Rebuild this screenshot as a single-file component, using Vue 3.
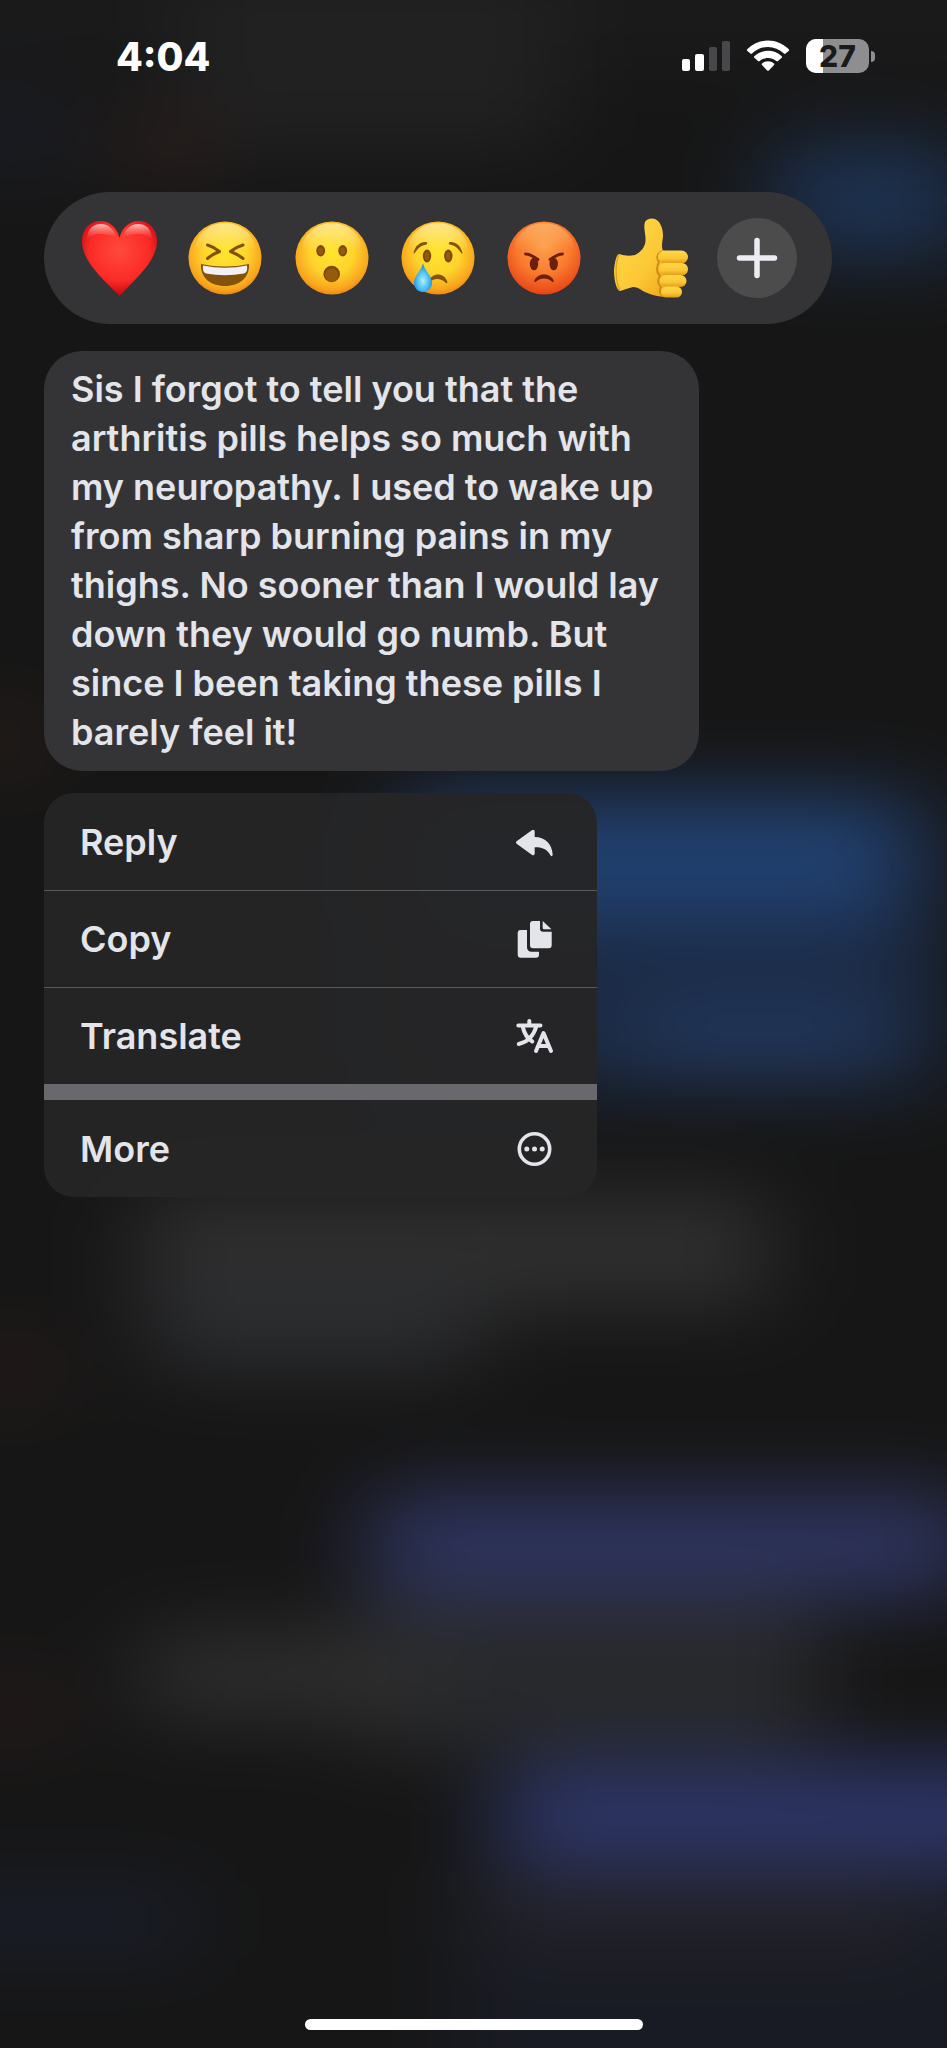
<template>
  <div class="screen">
    <svg class="backdrop" viewBox="0 0 947 2048" preserveAspectRatio="none" aria-hidden="true">
      <defs>
        <filter id="soft" x="-50%" y="-50%" width="200%" height="200%" color-interpolation-filters="sRGB">
          <feGaussianBlur stdDeviation="46 36" />
        </filter>
      </defs>
      <rect width="947" height="2048" fill="#161616" />
      <g filter="url(#soft)">
        <rect x="-200" y="-200" width="1347" height="2448" fill="#161616" />
        <rect v-for="(b, i) in blobs" :key="i" :x="b.x" :y="b.y" :width="b.w" :height="b.h" rx="30" :fill="b.color" />
      </g>
    </svg>

    <header class="status-bar">
      <time class="clock">4:04</time>
      <div class="status-icons">
        <svg class="signal" viewBox="0 0 48 30" aria-hidden="true">
          <rect x="0" y="18" width="8" height="12" rx="2" fill="#fff" />
          <rect x="13" y="13" width="9" height="17" rx="2" fill="#fff" />
          <rect x="27" y="6" width="8" height="24" rx="2" fill="#48484a" />
          <rect x="40" y="0" width="8" height="30" rx="2" fill="#48484a" />
        </svg>
        <svg class="wifi" viewBox="0 0 44 32" aria-hidden="true">
          <path d="M1.2 9.3C13 -2.4 31 -2.4 42.8 9.3Q43.5 10 42.8 10.7L39.6 13.6Q38.8 14.3 38 13.5C29 4.8 15 4.8 6 13.5Q5.2 14.3 4.4 13.6L1.2 10.7Q.5 10 1.2 9.3Z" fill="#fff" />
          <path d="M8.3 16.3C16 9 28 9 35.7 16.3Q36.4 17 35.7 17.7L32 21.1Q31.2 21.8 30.4 21.1C25.6 16.8 18.4 16.8 13.6 21.1Q12.8 21.8 12 21.1L8.3 17.7Q7.6 17 8.3 16.3Z" fill="#fff" />
          <path d="M16 23.6C19.5 20.6 24.5 20.6 28 23.6Q28.7 24.3 28 25L22.8 30.4Q22 31.2 21.2 30.4L16 25Q15.3 24.3 16 23.6Z" fill="#fff" />
        </svg>
        <div class="battery">
          <div class="battery-body">
            <div class="battery-level" :style="{ width: battery + '%' }"></div>
            <span class="battery-text">{{ battery }}</span>
          </div>
          <div class="battery-cap"></div>
        </div>
      </div>
    </header>

    <main class="content">
      <svg class="shared-defs" aria-hidden="true">
        <defs>
          <radialGradient id="face" cx=".5" cy=".42" r=".6">
            <stop offset="0" stop-color="#ffe62e" />
            <stop offset=".5" stop-color="#fed42c" />
            <stop offset=".85" stop-color="#f9a51d" />
            <stop offset="1" stop-color="#e98212" />
          </radialGradient>
          <linearGradient id="shine" x1="0" y1="0" x2="0" y2="1">
            <stop offset="0" stop-color="#fff3b0" stop-opacity=".75" />
            <stop offset=".5" stop-color="#fff3b0" stop-opacity="0" />
          </linearGradient>
          <radialGradient id="rage" cx=".5" cy=".35" r=".66">
            <stop offset="0" stop-color="#fca04a" />
            <stop offset=".55" stop-color="#fa7a2e" />
            <stop offset="1" stop-color="#e84313" />
          </radialGradient>
          <radialGradient id="heart" cx=".5" cy=".4" r=".58">
            <stop offset="0" stop-color="#ff4a3d" />
            <stop offset=".7" stop-color="#fb2a26" />
            <stop offset="1" stop-color="#c50d14" />
          </radialGradient>
          <linearGradient id="heartShine" x1="0" y1="0" x2="0" y2="1">
            <stop offset="0" stop-color="#ffd5d3" stop-opacity=".9" />
            <stop offset="1" stop-color="#ff5a4f" stop-opacity="0" />
          </linearGradient>
          <radialGradient id="tear" cx=".5" cy=".6" r=".55">
            <stop offset="0" stop-color="#b4f0ff" />
            <stop offset=".5" stop-color="#57c6f8" />
            <stop offset="1" stop-color="#1b8fd6" />
          </radialGradient>
          <linearGradient id="hand" x1="0" y1="0" x2="1" y2="1">
            <stop offset="0" stop-color="#ffda4a" />
            <stop offset=".6" stop-color="#fdc835" />
            <stop offset="1" stop-color="#eda41c" />
          </linearGradient>
          <linearGradient id="finger" x1="0" y1="0" x2="0" y2="1">
            <stop offset="0" stop-color="#ffd84a" />
            <stop offset=".6" stop-color="#fcc634" />
            <stop offset="1" stop-color="#e09a18" />
          </linearGradient>
        </defs>
      </svg>

      <div class="reactions">
        <button class="reaction" type="button" aria-label="Love">
          <svg viewBox="0 0 80 80">
            <path d="M40.5 20C43 9 51 3 60 3C70 3 78 11 78 23C78 43 58 59 41.5 77Q40.5 78.5 39.5 77C22 59 3 43 3 23C3 11 11 3 21 3C30 3 38 9 40.5 20Z" fill="url(#heart)" />
            <path d="M8 22C8 10 15 6 22 6C29 6 35 11 38 20C34 17 28 16 22 16C16 16 12 17 8 22Z" fill="url(#heartShine)" />
            <path d="M43 20C46 11 52 6 59 6C66 6 73 10 73 22C69 17 65 16 59 16C53 16 47 17 43 20Z" fill="url(#heartShine)" />
          </svg>
        </button>
        <button class="reaction" type="button" aria-label="Haha">
          <svg viewBox="0 0 80 80">
            <circle cx="40" cy="40" r="36.5" fill="url(#face)" />
            <ellipse cx="40" cy="32" rx="30" ry="27" fill="url(#shine)" />
            <g fill="none" stroke="#81510d" stroke-width="3" stroke-linecap="round" stroke-linejoin="round">
              <path d="M22.5 27Q29 29 34.5 33.5Q28 36 22.5 40.5" />
              <path d="M58 27Q51 29 45.5 33.5Q52 36 58 40.5" />
            </g>
            <path d="M16 46Q40 51 64 46C65 59 55 68 40 68C25 68 15 59 16 46Z" fill="#84520c" />
            <path d="M18 47.5Q40 52 62 47.5Q63 54 59 55.5Q40 59 21 55.5Q17 54 18 47.5Z" fill="#f3f1f5" />
          </svg>
        </button>
        <button class="reaction" type="button" aria-label="Wow">
          <svg viewBox="0 0 80 80">
            <circle cx="40" cy="40" r="36.5" fill="url(#face)" />
            <ellipse cx="40" cy="32" rx="30" ry="27" fill="url(#shine)" />
            <g fill="#7f4a08">
              <ellipse cx="28.7" cy="32.7" rx="4.4" ry="5.7" />
              <ellipse cx="50.7" cy="32.7" rx="4.4" ry="5.7" />
              <circle cx="39.7" cy="56" r="8.3" />
            </g>
            <circle cx="39.7" cy="57" r="6.5" fill="#965b0a" />
            <ellipse cx="28.7" cy="33" rx="2.5" ry="3.5" fill="#965b0a" />
            <ellipse cx="50.7" cy="33" rx="2.5" ry="3.5" fill="#965b0a" />
          </svg>
        </button>
        <button class="reaction" type="button" aria-label="Sad">
          <svg viewBox="0 0 80 80">
            <circle cx="40" cy="40" r="36.5" fill="url(#face)" />
            <ellipse cx="40" cy="32" rx="30" ry="27" fill="url(#shine)" />
            <ellipse cx="29" cy="38" rx="4.2" ry="6.4" fill="#7f4a08" />
            <ellipse cx="50.3" cy="38" rx="4.2" ry="6.4" fill="#7f4a08" />
            <ellipse cx="29" cy="38" rx="2.2" ry="4" fill="#965b0a" />
            <ellipse cx="50.3" cy="38" rx="2.2" ry="4" fill="#965b0a" />
            <g fill="#86530d">
              <path d="M15.5 35C17 28 22 23.5 28.5 24Q30 24.8 28.5 26.5C23 27.5 20 30 16.8 35Q16 36 15.5 35Z" />
              <path d="M64.5 35C63 28 58 23.5 51.5 24Q50 24.8 51.5 26.5C57 27.5 60 30 63.2 35Q64 36 64.5 35Z" />
              <path d="M31 63C34 54.5 46 54 49.5 64Q49.5 65.5 48 65C43 60 36 60 32 64Z" />
            </g>
            <path d="M25 45.5C27 53 34 58 34 65C34 70 30 74 25 74C20 74 16 70 16 65C16 58 23 53 25 45.5Z" fill="url(#tear)" />
          </svg>
        </button>
        <button class="reaction" type="button" aria-label="Angry">
          <svg viewBox="0 0 80 80">
            <circle cx="40" cy="40" r="36.5" fill="url(#rage)" />
            <ellipse cx="40" cy="32" rx="30" ry="27" fill="url(#shine)" opacity=".5" />
            <g fill="#6b200c">
              <ellipse cx="30" cy="46" rx="4.2" ry="6.3" />
              <ellipse cx="49.7" cy="46" rx="4.2" ry="6.3" />
              <path d="M30.5 62C34 54.5 46 54.5 49.5 62Q50.5 65 48 63.5C43 59.5 37 59.5 32 63.5Q29.5 65 30.5 62Z" />
            </g>
            <g fill="none" stroke="#6b200c" stroke-width="2.8" stroke-linecap="round">
              <path d="M21.5 36Q26 36 34 41.5" />
              <path d="M58.5 36Q54 36 46 41.5" />
            </g>
          </svg>
        </button>
        <button class="reaction" type="button" aria-label="Like">
          <svg viewBox="0 0 80 80">
            <path d="M8 36C14 38 19 38 24 37C30 34 34 29 34.5 23C35 16 32 10 34 4C36 0 43 -1 47 3C51 7 53 15 51.5 22C51 26 50.5 29 52 33L60 40L58 78C50 80 41 77 34 74C30 72 27 69 22 69C17 70 13 72 9 73C5 72 3 61 3 52C4 44 5 37 8 36Z" fill="url(#hand)" />
            <path d="M8 37C4 44 4 64 9 72" fill="none" stroke="#e5a31c" stroke-width="1.5" />
            <path d="M52 33C46 35 45 40 48 44C45 50 45 54 49 58C46 62 47 67 50 69C48 73 49 77 52 78" fill="none" stroke="#cf8c16" stroke-width="2" stroke-linecap="round" />
            <rect x="47" y="32.5" width="30" height="13" rx="6.5" fill="url(#finger)" />
            <rect x="48" y="45" width="29" height="12.5" rx="6.2" fill="url(#finger)" />
            <rect x="49" y="57" width="26.5" height="12" rx="6" fill="url(#finger)" />
            <rect x="50" y="68.5" width="21" height="11" rx="5.5" fill="url(#finger)" />
          </svg>
        </button>
        <button class="reaction add" type="button" aria-label="Add reaction">
          <svg viewBox="0 0 80 80">
            <path d="M40 22.5V57.5M22.5 40H57.5" stroke="#ececf2" stroke-width="5.5" stroke-linecap="round" />
          </svg>
        </button>
      </div>

      <p class="bubble">{{ message }}</p>

      <ul class="menu">
        <li v-for="item in menu" :key="item.id" class="menu-row" :class="{ detached: item.detached }">
          <button class="menu-item" type="button">
            <span>{{ item.label }}</span>
            <svg class="menu-icon" viewBox="0 0 40 40" aria-hidden="true">
              <path v-if="item.id === 'reply'" d="M2.6 19.2L17.8 8.2Q20.7 6.8 20.7 9.8V15C31 15 38 22 38.7 32.5Q38.3 35.5 36.6 33.5C33 27 28.5 25.3 20.7 25.3V31.2Q20.7 34.2 17.8 32.7L2.6 21.8Q1.2 20.5 2.6 19.2Z" fill="#e4e5ea" />
              <g v-else-if="item.id === 'copy'" fill="#e4e5ea">
                <path d="M6.7 11H13V28Q13 32.7 17.7 32.7H25V35.7Q25 38.7 22 38.7H6.7Q3.7 38.7 3.7 35.7V14Q3.7 11 6.7 11Z" />
                <path d="M19 2H26V9.5Q26 12.7 29.2 12.7H37.7V26.3Q37.7 29.3 34.7 29.3H19Q16 29.3 16 26.3V5Q16 2 19 2Z" />
                <path d="M28.7 2L37.5 10.3H30.2Q28.7 10.3 28.7 8.8Z" />
              </g>
              <g v-else-if="item.id === 'translate'" fill="none" stroke="#e4e5ea" stroke-width="4" stroke-linecap="round" stroke-linejoin="round">
                <path d="M4.3 9.5H26.5M15.3 5V9.5M8.7 10.5C10 17 13.5 22.5 18.3 25.5M22.3 10.5C19.5 20 13.5 26 4.8 28" />
                <path d="M22 35L29.5 17L37 35M24.5 30H34.5" />
              </g>
              <g v-else>
                <circle cx="20.5" cy="20" r="15.2" fill="none" stroke="#e4e5ea" stroke-width="3.6" />
                <g fill="#e4e5ea">
                  <circle cx="12.8" cy="20" r="2.5" />
                  <circle cx="20.5" cy="20" r="2.5" />
                  <circle cx="28.2" cy="20" r="2.5" />
                </g>
              </g>
            </svg>
          </button>
        </li>
      </ul>
    </main>

    <div class="home-indicator"></div>
  </div>
</template>

<script setup>
import { ref } from 'vue';

const battery = ref(27);

const message = ref(
  'Sis I forgot to tell you that the arthritis pills helps so much with my neuropathy. I used to wake up from sharp burning pains in my thighs. No sooner than I would lay down they would go numb. But since I been taking these pills I barely feel it!'
);

const menu = [
  { id: 'reply', label: 'Reply' },
  { id: 'copy', label: 'Copy' },
  { id: 'translate', label: 'Translate' },
  { id: 'more', label: 'More', detached: true },
];

// blurred conversation behind the menu
const blobs = [
  { x: -100, y: -100, w: 1150, h: 170, color: '#1a1a1b' },
  { x: 180, y: -40, w: 380, h: 190, color: '#212121' },
  { x: 110, y: 110, w: 110, h: 70, color: '#2a1e1c' },
  { x: -60, y: 90, w: 140, h: 90, color: '#1a1c23' },
  { x: 770, y: 140, w: 200, h: 120, color: '#1d3150' },
  { x: -60, y: 700, w: 110, h: 80, color: '#241b17' },
  { x: 400, y: 790, w: 540, h: 300, color: '#1b2a44' },
  { x: 400, y: 800, w: 500, h: 120, color: '#21406f' },
  { x: 630, y: 1000, w: 260, h: 70, color: '#22375c' },
  { x: 140, y: 1190, w: 630, h: 120, color: '#2e2e2e' },
  { x: 150, y: 1270, w: 330, h: 100, color: '#2c2d30' },
  { x: -60, y: 1330, w: 130, h: 80, color: '#221a18' },
  { x: 370, y: 1490, w: 600, h: 110, color: '#2d335c' },
  { x: 350, y: 1600, w: 470, h: 150, color: '#28292c' },
  { x: 140, y: 1630, w: 300, h: 90, color: '#2d2d2d' },
  { x: -60, y: 1670, w: 130, h: 80, color: '#221a18' },
  { x: 450, y: 1860, w: 700, h: 320, color: '#191b24' },
  { x: 480, y: 1860, w: 440, h: 90, color: '#222228' },
  { x: 500, y: 1760, w: 600, h: 110, color: '#2c3464' },
  { x: -100, y: 1880, w: 300, h: 80, color: '#1a1d29' },
];
</script>

<style scoped>
.screen {
  position: relative;
  display: flex;
  flex-direction: column;
  min-height: 100vh;
  overflow: hidden;
  background: #161616;
  color: #e4e5ea;
  font-family: Inter, "Liberation Sans", sans-serif;
}

.backdrop {
  position: absolute;
  inset: 0;
  width: 100%;
  height: 100%;
}

.status-bar {
  position: relative;
  display: flex;
  align-items: center;
  justify-content: space-between;
  height: 112px;
  padding: 0 72px 0 116px;
}

.clock {
  color: #fff;
  font-size: 39px;
  font-weight: 800;
}

.status-icons {
  display: flex;
  align-items: center;
  gap: 16px;
}

.signal {
  width: 48px;
  height: 30px;
}

.wifi {
  width: 44px;
  height: 32px;
}

.battery {
  display: flex;
  align-items: center;
  gap: 2px;
}

.battery-body {
  position: relative;
  display: flex;
  align-items: center;
  justify-content: center;
  width: 63px;
  height: 34px;
  border-radius: 10px;
  background: #8e8e90;
  overflow: hidden;
}

.battery-level {
  position: absolute;
  inset: 0 auto 0 0;
  background: #fff;
}

.battery-text {
  position: relative;
  color: #1a1a1c;
  font-size: 30px;
  font-weight: 800;
}

.battery-cap {
  width: 4px;
  height: 11px;
  border-radius: 0 5px 5px 0;
  background: #8e8e90;
}

.content {
  position: relative;
  padding: 80px 44px 40px;
}

.shared-defs {
  position: absolute;
  width: 0;
  height: 0;
}

.reactions {
  box-sizing: border-box;
  display: flex;
  align-items: center;
  justify-content: space-between;
  max-width: 788px;
  height: 132px;
  padding: 0 35px;
  border-radius: 66px;
  background: #343436;
}

.reaction {
  width: 80px;
  height: 80px;
  padding: 0;
  border: none;
  background: none;
  cursor: pointer;
}

.reaction svg {
  display: block;
  width: 100%;
  height: 100%;
  overflow: visible;
}

.add {
  border-radius: 50%;
  background: #4c4c4d;
}

.bubble {
  box-sizing: border-box;
  max-width: 655px;
  margin: 27px 0 22px;
  padding: 14px 27px;
  border-radius: 38px;
  background: #343436;
  font-size: 36px;
  font-weight: 600;
  line-height: 49px;
}

.menu {
  max-width: 553px;
  margin: 0;
  padding: 0;
  border-radius: 30px;
  background: rgba(37, 37, 38, 0.96);
  list-style: none;
  overflow: hidden;
}

.menu-row + .menu-row {
  box-shadow: inset 0 1px #58585a;
}

.menu-row + .menu-row.detached {
  border-top: 16px solid #68686d;
  box-shadow: none;
}

.menu-item {
  display: flex;
  align-items: center;
  justify-content: space-between;
  width: 100%;
  height: 97px;
  padding: 0 43px 0 36px;
  border: none;
  background: none;
  color: inherit;
  font-family: inherit;
  font-size: 36px;
  font-weight: 600;
  cursor: pointer;
}

.menu-icon {
  width: 40px;
  height: 40px;
}

.home-indicator {
  position: relative;
  width: 338px;
  height: 11px;
  margin: auto auto 18px;
  border-radius: 6px;
  background: #fff;
}
</style>

<style>
body {
  margin: 0;
  background: #161616;
}
</style>
